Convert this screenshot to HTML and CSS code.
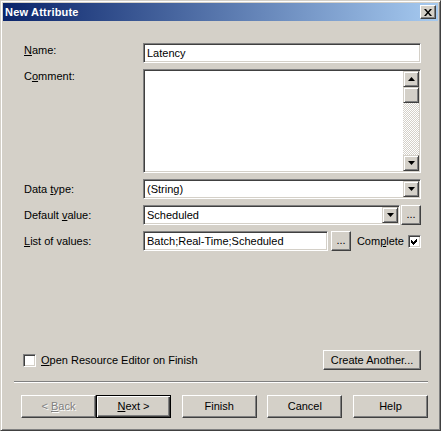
FILE: index.html
```html
<!DOCTYPE html>
<html>
<head>
<meta charset="utf-8">
<title>New Attribute</title>
<link rel="stylesheet" href="styles.css">
</head>
<body>
<div class="window">
  <div class="titlebar">
    <span class="title">New Attribute</span>
    <div class="close">
      <svg width="8" height="7" viewBox="0 0 8 7"><path d="M0 0h2l2 2.4L6 0h2L5 3.5 8 7H6L4 4.6 2 7H0l3-3.5z" fill="#000"/></svg>
    </div>
  </div>
  <div class="client">
    <div class="form">
      <div class="lbl lbl-top"><u>N</u>ame:</div>
      <div class="sunken textbox">Latency</div>

      <div class="lbl lbl-top">C<u>o</u>mment:</div>
      <div class="sunken memo">
        <div class="memo-text"></div>
        <div class="vscroll">
          <div class="arrowbtn"><svg width="7" height="4" viewBox="0 0 7 4"><path d="M3.5 0L7 4H0z" fill="#000"/></svg></div>
          <div class="thumb"></div>
          <div class="track"></div>
          <div class="arrowbtn"><svg width="7" height="4" viewBox="0 0 7 4"><path d="M0 0h7L3.5 4z" fill="#000"/></svg></div>
        </div>
      </div>

      <div class="lbl">Data <u>t</u>ype:</div>
      <div class="sunken combo">
        <span class="combo-text">(String)</span>
        <div class="arrowbtn combo-arrow"><svg width="7" height="4" viewBox="0 0 7 4"><path d="M0 0h7L3.5 4z" fill="#000"/></svg></div>
      </div>

      <div class="lbl">Default <u>v</u>alue:</div>
      <div class="field-row">
        <div class="sunken combo combo-short">
          <span class="combo-text">Scheduled</span>
          <div class="arrowbtn combo-arrow"><svg width="7" height="4" viewBox="0 0 7 4"><path d="M0 0h7L3.5 4z" fill="#000"/></svg></div>
        </div>
        <div class="btn dots dots-tight">...</div>
      </div>

      <div class="lbl"><u>L</u>ist of values:</div>
      <div class="field-row">
        <div class="sunken textbox list-box">Batch;Real-Time;Scheduled</div>
        <div class="btn dots dots-list">...</div>
        <span class="complete-label">Com<u>p</u>lete</span>
        <div class="checkbox sunken">
          <svg width="9" height="9" viewBox="0 0 9 9" shape-rendering="crispEdges"><path d="M1 3L3 5L7 1V4L3 8L1 6z" fill="#000"/></svg>
        </div>
      </div>
    </div>

    <div class="footer">
      <div class="optrow">
        <div class="checkbox sunken"></div>
        <span class="opt-label"><u>O</u>pen Resource Editor on Finish</span>
        <div class="btn create">Create Another...</div>
      </div>
      <div class="sep"></div>
      <div class="buttons">
        <div class="pair">
          <div class="btn wiz disabled">&lt;&nbsp;<u>B</u>ack</div>
          <div class="btn wiz default"><u>N</u>ext&nbsp;&gt;</div>
        </div>
        <div class="btn wiz">Finish</div>
        <div class="btn wiz">Cancel</div>
        <div class="btn wiz">Help</div>
      </div>
    </div>
  </div>
</div>
</body>
</html>
```

FILE: styles.css
```css
* {
  box-sizing: border-box;
}

body {
  margin: 0;
  font-family: "Liberation Sans", Arial, sans-serif;
  font-size: 11px;
  line-height: 13px;
  color: #000;
  background: #d4d0c8;
}

u {
  text-decoration: underline;
  text-underline-offset: 1px;
}

.window {
  width: 441px;
  height: 431px;
  background: #d4d0c8;
  border: 1px solid;
  border-color: #d4d0c8 #404040 #404040 #d4d0c8;
  box-shadow: inset 1px 1px #ffffff, inset -1px -1px #808080;
  padding: 2px;
  display: flex;
  flex-direction: column;
}

.titlebar {
  height: 18px;
  flex: none;
  background: linear-gradient(to right, #0a246a, #a6caf0);
  display: flex;
  align-items: center;
  padding: 0 2px 0 2px;
}

.title {
  flex: 1;
  color: #fff;
  font-weight: bold;
  font-size: 11px;
  letter-spacing: 0.2px;
}

.close {
  width: 16px;
  height: 14px;
  background: #d4d0c8;
  border: 1px solid;
  border-color: #ffffff #404040 #404040 #ffffff;
  box-shadow: inset -1px -1px #808080;
  display: flex;
  align-items: center;
  justify-content: center;
}

.client {
  flex: 1;
  display: flex;
  flex-direction: column;
}

.form {
  display: grid;
  grid-template-columns: 119px 278px;
  grid-template-rows: 20px 104px 20px 20px 20px;
  row-gap: 6px;
  padding: 22px 0 0 21px;
}

.lbl {
  align-self: center;
  white-space: nowrap;
}

.lbl-top {
  align-self: start;
  padding-top: 1px;
}

.sunken {
  background: #fff;
  border: 1px solid;
  border-color: #808080 #ffffff #ffffff #808080;
  box-shadow: inset 1px 1px #404040, inset -1px -1px #d4d0c8;
}

.textbox {
  height: 20px;
  display: flex;
  align-items: center;
  padding: 1px 3px 0 3px;
  white-space: nowrap;
}

.memo {
  height: 104px;
  display: flex;
  padding: 1px;
}

.memo-text {
  flex: 1;
}

.vscroll {
  width: 16px;
  display: flex;
  flex-direction: column;
}

.arrowbtn {
  width: 16px;
  height: 16px;
  flex: none;
  background: #d4d0c8;
  border: 1px solid;
  border-color: #d4d0c8 #404040 #404040 #d4d0c8;
  box-shadow: inset 1px 1px #ffffff, inset -1px -1px #808080;
  display: flex;
  align-items: center;
  justify-content: center;
}

.arrowbtn svg {
  display: block;
}

.thumb {
  height: 16px;
  flex: none;
  background: #d4d0c8;
  border: 1px solid;
  border-color: #d4d0c8 #404040 #404040 #d4d0c8;
  box-shadow: inset 1px 1px #ffffff, inset -1px -1px #808080;
}

.track {
  flex: 1;
  background: repeating-conic-gradient(#d4d0c8 0 25%, #ffffff 0 50%) 0 0 / 2px 2px;
}

.combo {
  height: 20px;
  display: flex;
  align-items: center;
  padding: 1px;
}

.combo-text {
  flex: 1;
  padding-left: 2px;
  white-space: nowrap;
}

.combo-arrow {
  align-self: stretch;
  height: auto;
}

.field-row {
  display: flex;
  align-items: center;
  height: 20px;
}

.combo-short {
  width: 257px;
  flex: none;
}

.btn {
  background: #d4d0c8;
  border: 1px solid;
  border-color: #ffffff #404040 #404040 #ffffff;
  box-shadow: inset -1px -1px #808080;
  display: flex;
  align-items: center;
  justify-content: center;
  white-space: nowrap;
}

.dots {
  width: 20px;
  height: 20px;
  flex: none;
  padding-bottom: 1px;
}

.dots-tight {
  margin-left: 1px;
}

.list-box {
  width: 185px;
  flex: none;
}

.dots-list {
  margin-left: 3px;
}

.complete-label {
  margin-left: auto;
  margin-right: 4px;
  white-space: nowrap;
}

.checkbox {
  width: 13px;
  height: 13px;
  flex: none;
  display: flex;
  align-items: center;
  justify-content: center;
  padding: 1px;
}

.checkbox svg {
  display: block;
}

.footer {
  margin-top: auto;
}

.optrow {
  height: 20px;
  display: flex;
  align-items: center;
  padding: 0 17px 0 20px;
}

.opt-label {
  margin-left: 5px;
  white-space: nowrap;
}

.create {
  margin-left: auto;
  width: 98px;
  height: 20px;
}

.sep {
  height: 2px;
  margin: 11px 10px 12px 11px;
  border-top: 1px solid #808080;
  border-bottom: 1px solid #ffffff;
}

.buttons {
  display: flex;
  justify-content: space-between;
  padding: 0 10px 10px 18px;
}

.pair {
  display: flex;
}

.wiz {
  width: 75px;
  height: 23px;
}

.disabled {
  color: #808080;
  text-shadow: 1px 1px 0 #ffffff;
}

.default {
  border: 1px solid #000;
  box-shadow: inset 1px 1px #ffffff, inset -1px -1px #404040, inset -2px -2px #808080;
}
```
